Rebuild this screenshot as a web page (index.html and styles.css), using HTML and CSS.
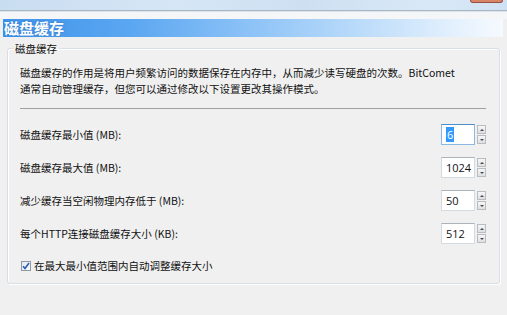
FILE: index.html
```html
<!DOCTYPE html>
<html lang="zh-CN">
<head>
<meta charset="utf-8">
<title>磁盘缓存</title>
<link rel="stylesheet" href="styles.css">
</head>
<body>
<div class="window">
  <div class="frame-top"><div class="close"></div></div>
  <div class="frame-line"></div>
  <div class="frame-gap"></div>
  <div class="header"><h1>磁盘缓存</h1></div>
  <fieldset class="group">
    <legend>磁盘缓存</legend>
    <p class="desc">磁盘缓存的作用是将用户频繁访问的数据保存在内存中，从而减少读写硬盘的次数。BitComet<br>通常自动管理缓存，但您可以通过修改以下设置更改其操作模式。</p>
    <div class="sep"></div>
    <div class="rows">
      <div class="row">
        <span class="label">磁盘缓存最小值 (MB):</span>
        <div class="spin">
          <div class="input focus"><span class="sel">6</span></div>
          <div class="btns"><span class="btn up"></span><span class="btn down"></span></div>
        </div>
      </div>
      <div class="row">
        <span class="label">磁盘缓存最大值 (MB):</span>
        <div class="spin">
          <div class="input">1024</div>
          <div class="btns"><span class="btn up"></span><span class="btn down"></span></div>
        </div>
      </div>
      <div class="row">
        <span class="label">减少缓存当空闲物理内存低于 (MB):</span>
        <div class="spin">
          <div class="input">50</div>
          <div class="btns"><span class="btn up"></span><span class="btn down"></span></div>
        </div>
      </div>
      <div class="row">
        <span class="label">每个HTTP连接磁盘缓存大小 (KB):</span>
        <div class="spin">
          <div class="input">512</div>
          <div class="btns"><span class="btn up"></span><span class="btn down"></span></div>
        </div>
      </div>
    </div>
    <div class="check">
      <span class="box"><svg width="8" height="8" viewBox="0 0 8 8"><path d="M1 4.2 L3 6.4 L7 1" fill="none" stroke="#2a5db0" stroke-width="1.6"/></svg></span>
      <span>在最大最小值范围内自动调整缓存大小</span>
    </div>
  </fieldset>
</div>
</body>
</html>
```
FILE: styles.css
```css
html, body {
  margin: 0;
  padding: 0;
}
body {
  width: 507px;
  height: 315px;
  overflow: hidden;
  background: #f0f0f0;
  font-family: "Noto Sans CJK SC", "Noto Sans", sans-serif;
  color: #111111;
}
.window {
  width: 507px;
}
.frame-top {
  position: relative;
  height: 10px;
  background: linear-gradient(to right, #c9ddf1 0%, #d6e6f5 35%, #cde0f2 60%, #d9e8f6 85%, #cfe2f4 100%);
}
.close {
  position: absolute;
  top: 0;
  right: 4px;
  width: 31px;
  height: 2px;
  background: #d88468;
  border: 1px solid #9a5040;
  border-top: none;
  border-radius: 0 0 4px 4px;
}
.frame-line {
  height: 1px;
  background: #a9b6c3;
  border-bottom: 1px solid #dde3ea;
}
.frame-gap {
  height: 7px;
  background: #f5f6f8;
}
.header {
  margin: 0 4px 0 3px;
  height: 18px;
  background: linear-gradient(to right, #3e93ea 0%, #5aa6f1 25%, #8ec3f7 50%, #bcdcfa 72%, #e3f0fd 90%, #f6fafe 100%);
}
.header h1 {
  margin: 0;
  padding-left: 1px;
  font-size: 15px;
  line-height: 18px;
  font-weight: bold;
  color: #ffffff;
  text-shadow: 0 0 2px #2c6fc0;
}
.group {
  margin: 5px 7px 0 7px;
  padding: 10px 13px 11px 12px;
  border: 1px solid #d5dfe5;
  border-radius: 3px;
  box-shadow: inset 1px 1px 0 #ffffff, 1px 1px 0 #ffffff;
  min-width: 0;
}
.group legend {
  margin-left: -7px;
  padding: 0 2px;
  font-size: 10.5px;
  line-height: 13px;
}
.desc {
  margin: 0;
  font-size: 10.5px;
  line-height: 16px;
  white-space: nowrap;
}
.sep {
  margin-top: 11px;
  height: 1px;
  background: #a0a0a0;
}
.rows {
  margin-top: 15px;
  display: flex;
  flex-direction: column;
  gap: 12px;
}
.row {
  display: flex;
  align-items: center;
  justify-content: space-between;
  height: 21px;
}
.label {
  font-size: 10.5px;
  line-height: 13px;
}
.spin {
  display: flex;
  align-items: flex-start;
  gap: 2px;
}
.input {
  box-sizing: border-box;
  width: 34px;
  height: 21px;
  padding-left: 4px;
  background: #ffffff;
  border: 1px solid #d3dae2;
  border-top-color: #abb3bc;
  font-family: "Open Sans", "Noto Sans", sans-serif;
  font-size: 11px;
  line-height: 19px;
  color: #111111;
}
.input.focus {
  border-color: #8cb8e2;
  border-top-color: #4f8ccc;
}
.sel {
  background: #3399ff;
  color: #ffffff;
  padding: 0 1px;
}
.btns {
  margin-top: 1px;
  display: flex;
  flex-direction: column;
  gap: 1px;
}
.btn {
  box-sizing: border-box;
  display: flex;
  align-items: center;
  justify-content: center;
  width: 9px;
  height: 9px;
  border: 1px solid #b9bcc0;
  background: linear-gradient(#f7f7f7, #dedfe1);
}
.btn::after {
  content: "";
  width: 0;
  height: 0;
  border-left: 2px solid transparent;
  border-right: 2px solid transparent;
}
.btn.up::after {
  border-bottom: 2px solid #4a4a4a;
}
.btn.down::after {
  border-top: 2px solid #4a4a4a;
}
.check {
  margin-top: 15px;
  display: flex;
  align-items: center;
  gap: 3px;
  font-size: 10.5px;
  line-height: 13px;
}
.box {
  box-sizing: border-box;
  margin-left: 1px;
  width: 10px;
  height: 10px;
  border: 1px solid #8e9aa6;
  background: linear-gradient(135deg, #e4e8ee, #fbfbfc);
  display: flex;
  align-items: center;
  justify-content: center;
}
.box svg {
  display: block;
}
```
